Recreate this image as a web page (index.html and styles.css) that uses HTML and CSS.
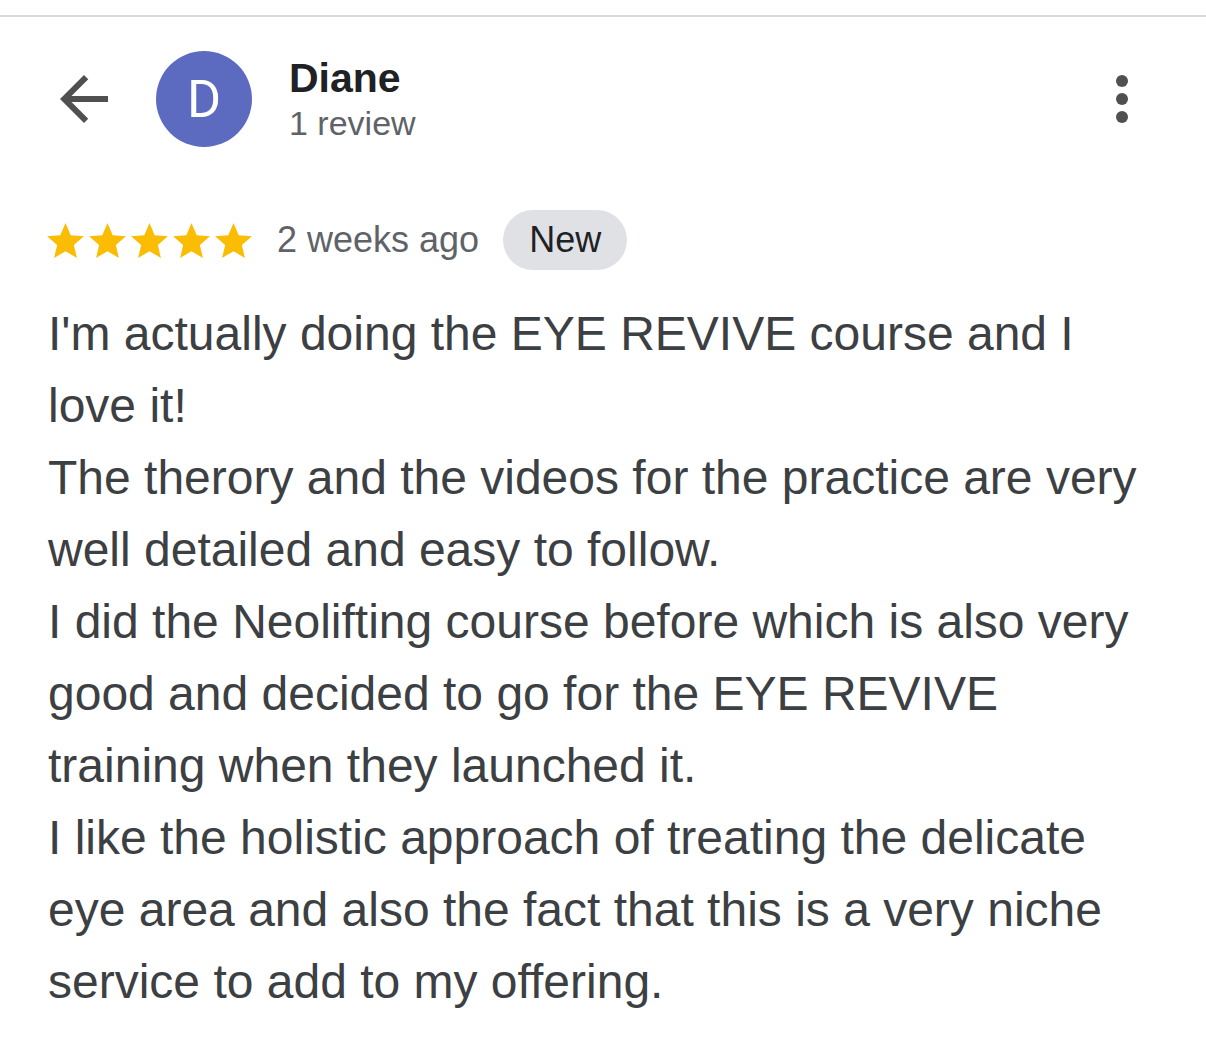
FILE: index.html
```html
<!DOCTYPE html>
<html lang="en">

<head>
  <meta charset="UTF-8" />
  <meta name="viewport" content="width=device-width, initial-scale=1" />
  <title>Review by Diane</title>
  <link rel="stylesheet" href="styles.css">
</head>

<body>
  <div class="divider"></div>

  <div class="review">
    <div class="header">
      <div class="author">
        <svg class="back" viewBox="0 0 24 24" width="72" height="72">
          <path d="M20 11H7.83l5.59-5.59L12 4l-8 8 8 8 1.41-1.41L7.83 13H20v-2z" />
        </svg>
        <div class="avatar">D</div>
        <div class="author-info">
          <div class="name">Diane</div>
          <div class="count">1 review</div>
        </div>
      </div>
      <svg class="more" viewBox="0 0 24 24" width="72" height="72">
        <circle cx="12" cy="6" r="2" />
        <circle cx="12" cy="12" r="2" />
        <circle cx="12" cy="18" r="2" />
      </svg>
    </div>

    <div class="meta">
      <div class="stars">
        <svg viewBox="2 2 20 19" width="37" height="35"><path d="M12 17.27L18.18 21l-1.64-7.03L22 9.24l-7.19-.61L12 2 9.19 8.63 2 9.24l5.46 4.73L5.82 21z" /></svg>
        <svg viewBox="2 2 20 19" width="37" height="35"><path d="M12 17.27L18.18 21l-1.64-7.03L22 9.24l-7.19-.61L12 2 9.19 8.63 2 9.24l5.46 4.73L5.82 21z" /></svg>
        <svg viewBox="2 2 20 19" width="37" height="35"><path d="M12 17.27L18.18 21l-1.64-7.03L22 9.24l-7.19-.61L12 2 9.19 8.63 2 9.24l5.46 4.73L5.82 21z" /></svg>
        <svg viewBox="2 2 20 19" width="37" height="35"><path d="M12 17.27L18.18 21l-1.64-7.03L22 9.24l-7.19-.61L12 2 9.19 8.63 2 9.24l5.46 4.73L5.82 21z" /></svg>
        <svg viewBox="2 2 20 19" width="37" height="35"><path d="M12 17.27L18.18 21l-1.64-7.03L22 9.24l-7.19-.61L12 2 9.19 8.63 2 9.24l5.46 4.73L5.82 21z" /></svg>
      </div>
      <span class="date">2 weeks ago</span>
      <span class="badge">New</span>
    </div>

    <p class="text">
      I'm actually doing the EYE REVIVE course and I love it!<br>
      The therory and the videos for the practice are very well detailed and easy to follow.<br>
      I did the Neolifting course before which is also very good and decided to go for the EYE REVIVE training when they launched it.<br>
      I like the holistic approach of treating the delicate eye area and also the fact that this is a very niche service to add to my offering.
    </p>
  </div>
</body>

</html>
```

FILE: styles.css
```css
body {
  margin: 0;
  padding-top: 15px;
  background-color: white;
  font-family: "Liberation Sans", Arial, sans-serif;
}

.divider {
  border-top: 2px solid #d9d9d9;
}

.review {
  padding: 0 48px;
}

.header {
  display: flex;
  justify-content: space-between;
  align-items: center;
  margin-top: 34px;
}

.author {
  display: flex;
  align-items: center;
}

.back {
  fill: #505050;
}

.avatar {
  width: 96px;
  height: 96px;
  border-radius: 50%;
  background-color: #5c6bc0;
  color: white;
  font-family: Roboto, sans-serif;
  font-size: 52px;
  display: flex;
  justify-content: center;
  align-items: center;
  margin-left: 36px;
}

.author-info {
  margin-left: 37px;
}

.name {
  font-size: 41px;
  line-height: 46px;
  font-weight: bold;
  color: #202124;
}

.count {
  font-size: 34px;
  line-height: 40px;
  margin-top: 2px;
  color: #5f6368;
}

.more {
  fill: #505050;
}

.meta {
  display: flex;
  align-items: center;
  height: 60px;
  margin-top: 63px;
}

.stars {
  display: flex;
  gap: 5px;
  margin-left: -1px;
}

.stars svg {
  fill: #fbbc04;
}

.date {
  font-size: 36px;
  color: #5f6368;
  margin-left: 25px;
}

.badge {
  font-size: 36px;
  color: #202124;
  background-color: #dfe1e5;
  height: 60px;
  line-height: 60px;
  padding: 0 26px;
  border-radius: 30px;
  margin-left: 24px;
}

.text {
  margin: 28px 0 0;
  font-size: 48px;
  line-height: 72px;
  color: #3c4043;
}
```
